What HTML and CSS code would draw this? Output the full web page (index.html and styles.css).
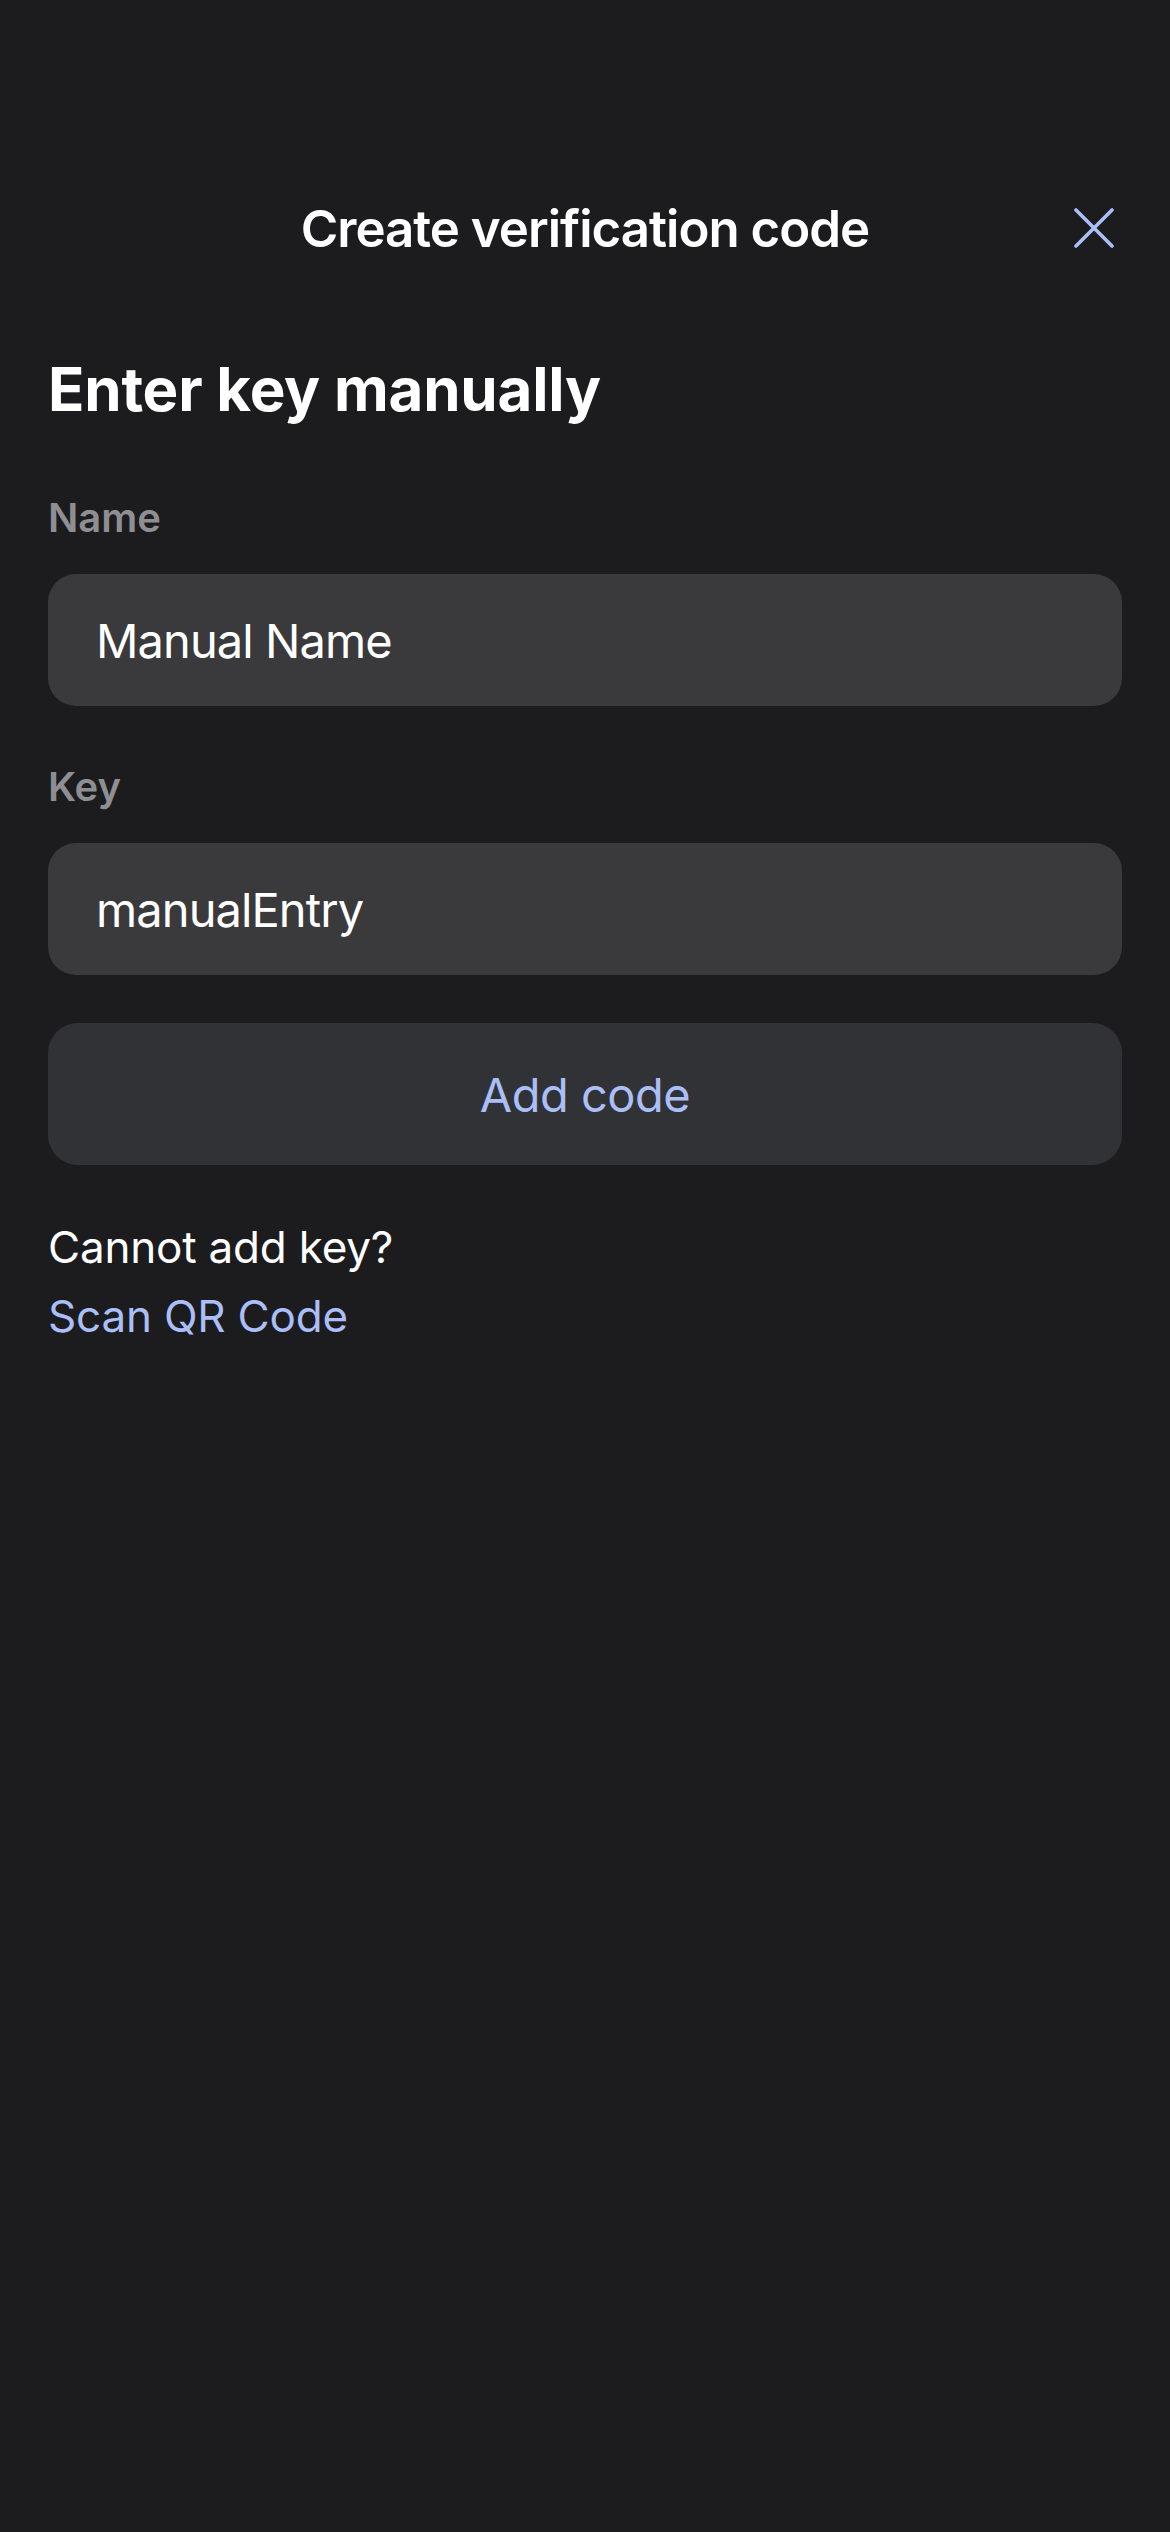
FILE: index.html
```html
<!DOCTYPE html>
<html lang="en">
<head>
<meta charset="utf-8">
<title>Create verification code</title>
<link rel="stylesheet" href="styles.css">
</head>
<body>
<div class="screen">
  <header class="topbar">
    <div class="topbar-title">Create verification code</div>
    <button class="close-btn" aria-label="Close">
      <svg width="40" height="40" viewBox="0 0 40 40" fill="none" stroke="#aabef7" stroke-width="3.6" stroke-linecap="round">
        <path d="M2 2 L38 38 M38 2 L2 38"/>
      </svg>
    </button>
  </header>

  <main class="content">
    <h1 class="page-title">Enter key manually</h1>

    <div class="field">
      <label class="field-label">Name</label>
      <div class="field-input">Manual Name</div>
    </div>

    <div class="field">
      <label class="field-label">Key</label>
      <div class="field-input">manualEntry</div>
    </div>

    <button class="primary-btn">Add code</button>

    <div class="help">
      <div class="help-text">Cannot add key?</div>
      <div class="help-link">Scan QR Code</div>
    </div>
  </main>
</div>
</body>
</html>
```

FILE: styles.css
```css
* { box-sizing: border-box; }

html, body {
  margin: 0;
  padding: 0;
  background: #1c1c1e;
}

body {
  font-family: Inter, "Noto Sans", "Liberation Sans", sans-serif;
  color: #ffffff;
  width: 1170px;
  min-height: 2532px;
}

.screen {
  padding-top: 198px;
}

.topbar {
  position: relative;
  height: 62px;
  display: flex;
  align-items: center;
  justify-content: center;
}

.topbar-title {
  font-size: 51px;
  line-height: 62px;
  font-weight: 600;
  letter-spacing: -1px;
  color: #ffffff;
}

.close-btn {
  position: absolute;
  right: 56px;
  top: 10px;
  width: 40px;
  height: 40px;
  padding: 0;
  border: 0;
  background: transparent;
  display: flex;
}

.content {
  padding: 93px 48px 0 48px;
  display: flex;
  flex-direction: column;
}

.page-title {
  margin: 0;
  font-size: 60px;
  line-height: 72px;
  font-weight: 700;
  letter-spacing: -0.2px;
  color: #ffffff;
}

.field {
  display: flex;
  flex-direction: column;
  margin-top: 69px;
}

.field + .field {
  margin-top: 57px;
}

.field-label {
  font-size: 40px;
  line-height: 48px;
  font-weight: 600;
  color: #8e8e93;
  margin-bottom: 32px;
}

.field-input {
  height: 132px;
  border-radius: 28px;
  background: #3a3a3c;
  display: flex;
  align-items: center;
  padding-left: 48px;
  font-size: 47px;
  letter-spacing: -0.9px;
  color: #ffffff;
}

.primary-btn {
  margin-top: 48px;
  height: 142px;
  border: 0;
  border-radius: 30px;
  background: #313236;
  color: #aabef7;
  font-family: inherit;
  font-size: 47px;
  font-weight: 400;
  letter-spacing: -0.5px;
  display: flex;
  align-items: center;
  justify-content: center;
}

.help {
  margin-top: 48px;
  display: flex;
  flex-direction: column;
}

.help-text,
.help-link {
  font-size: 44px;
  line-height: 69px;
  letter-spacing: -0.2px;
}

.help-text { color: #ffffff; }
.help-link { color: #aabef7; }
```
